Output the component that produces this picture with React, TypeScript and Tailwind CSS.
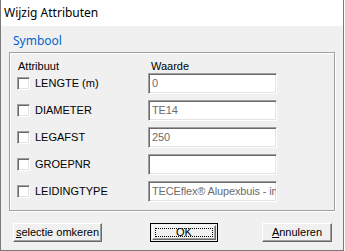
const rows = [
  { label: "LENGTE (m)", value: "0" },
  { label: "DIAMETER", value: "TE14" },
  { label: "LEGAFST", value: "250" },
  { label: "GROEPNR", value: "" },
  { label: "LEIDINGTYPE", value: "TECEflex® Alupexbuis - in" },
];

const Checkbox = () => (
  <div className="w-[13px] h-[13px] shrink-0 bg-white border border-t-[#a0a0a0] border-l-[#a0a0a0] border-b-white border-r-white shadow-[inset_1px_1px_0_#696969,inset_-1px_-1px_0_#e3e3e3]" />
);

const App = () => {
  return (
    <div className="w-[345px] h-[251px] bg-white font-['Liberation_Sans',Arial,sans-serif] text-[11px] text-black">
      <div className="w-[344px] h-[251px] flex flex-col border-l border-r border-b border-[#7a7a7a]">
        {/* title bar */}
        <div className="h-[26px] shrink-0 bg-white flex items-center pl-[3px] pb-[1px]">
          <span className="font-['Noto_Sans',sans-serif] text-[12px] leading-[16px] text-black">
            Wijzig Attributen
          </span>
        </div>

        <div className="flex-1 bg-[#f0f0f0] flex flex-col px-[8px]">
          <div className="mt-[7px] ml-[4px] font-['Noto_Sans',sans-serif] text-[12px] leading-[16px] text-[#0066cc]">
            Symbool
          </div>

          {/* group box */}
          <div className="mt-[3px] w-[326px] h-[159px] border border-[#a0a0a0] shadow-[1px_1px_0_#fff,inset_1px_1px_0_#fff] flex flex-col pt-[7px]">
            <div className="flex leading-[13px] h-[13px]">
              <div className="w-[138px] pl-[8px]">Attribuut</div>
              <div className="pl-[3px]">Waarde</div>
            </div>
            <div className="flex flex-col gap-[6px]">
              {rows.map((row) => (
                <div key={row.label} className="flex items-center h-[21px]">
                  <div className="w-[138px] flex items-center pl-[7px] gap-[5px]">
                    <Checkbox />
                    <span className="leading-[13px]">{row.label}</span>
                  </div>
                  <div className="w-[129px] h-[21px] bg-white border border-t-[#a0a0a0] border-l-[#a0a0a0] border-b-white border-r-white shadow-[inset_1px_1px_0_#696969,inset_-1px_-1px_0_#e3e3e3] flex items-center pl-[3px] overflow-hidden whitespace-nowrap text-[#6d6d6d] leading-[13px] tracking-[-0.15px]">
                    {row.value}
                  </div>
                </div>
              ))}
            </div>
          </div>

          {/* buttons */}
          <div className="mt-[12px] flex ml-[4px]">
            <button className="w-[89px] h-[19px] bg-[#f0f0f0] border border-t-white border-l-white border-b-[#696969] border-r-[#696969] shadow-[inset_-1px_-1px_0_#a0a0a0] flex items-center justify-center leading-[13px]">
              <span>
                <span className="underline">s</span>electie omkeren
              </span>
            </button>
            <button className="ml-[48px] w-[68px] h-[19px] bg-[#f0f0f0] border border-black p-[1px] flex">
              <div className="flex-1 border border-t-white border-l-white border-b-[#696969] border-r-[#696969] shadow-[inset_-1px_-1px_0_#a0a0a0] p-[2px] flex">
                <div className="flex-1 border border-dotted border-black flex items-center justify-center leading-[11px]">
                  OK
                </div>
              </div>
            </button>
            <button className="ml-[44px] w-[70px] h-[19px] bg-[#f0f0f0] border border-t-white border-l-white border-b-[#696969] border-r-[#696969] shadow-[inset_-1px_-1px_0_#a0a0a0] flex items-center justify-center leading-[13px]">
              <span>
                <span className="underline">A</span>nnuleren
              </span>
            </button>
          </div>
        </div>
      </div>
    </div>
  );
};

export default App;
